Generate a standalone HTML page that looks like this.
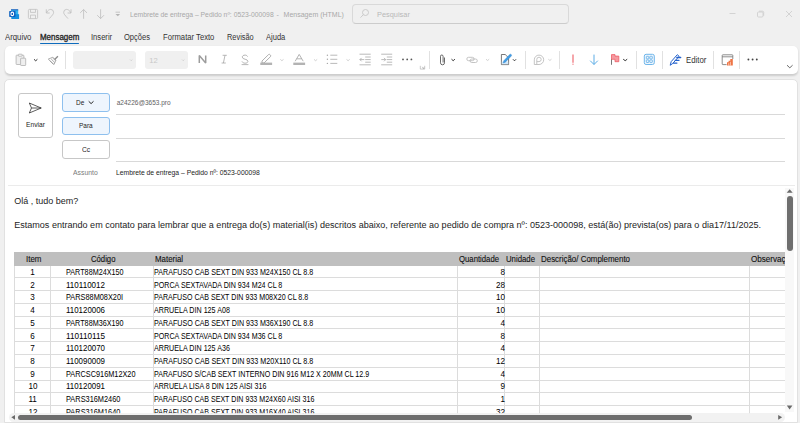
<!DOCTYPE html>
<html><head><meta charset="utf-8"><style>
*{box-sizing:border-box;margin:0;padding:0}
html,body{width:800px;height:423px;overflow:hidden;background:#f0f0f0;font-family:"Liberation Sans",sans-serif;color:#242424}
.a{position:absolute}
svg{position:absolute;overflow:visible}
.title{position:absolute;left:130px;top:10.3px;font-size:7px;line-height:10px;color:#a8a8a8;white-space:nowrap}
.search{position:absolute;left:352.3px;top:4px;width:217px;height:19.5px;border:1px solid #d9d9d9;border-bottom-color:#cccccc;border-radius:4px;background:#f0f0f0}
.search span{position:absolute;left:23.7px;top:4.9px;font-size:7.4px;line-height:10px;color:#b8b8b8}
.tab{position:absolute;top:32.1px;font-size:8.3px;line-height:10px;color:#3a3a3a;white-space:nowrap;transform:scaleX(.93);transform-origin:0 50%}
.uline{position:absolute;left:39.7px;top:42.5px;width:39.5px;height:1.6px;background:#0f6cbd;border-radius:1px}
.ribbon{position:absolute;left:5px;top:46px;width:793px;height:28.3px;background:#fff;border-radius:5px;box-shadow:0 1.2px 2px rgba(0,0,0,.15)}
.sep{position:absolute;top:50.5px;width:1px;height:18px;background:#e1e1e1}
.combo{position:absolute;top:51px;height:18px;background:#f0f0f0;border-radius:3px}
.chev{position:absolute}
.card{position:absolute;left:4px;top:78.5px;width:794px;height:344px;background:#fff;border:1px solid #e1e1e1;border-radius:5px 5px 0 0}
.btn{position:absolute;border:1px solid #c7c7c7;border-radius:3px;background:#fff;font-size:6.6px;line-height:9px;color:#242424;text-align:center}
.btn.sel{background:#eef5fd;border-color:#8ec0ee}
.fline{position:absolute;left:116.4px;width:669px;height:1px;background:#d9d9d9}
.body{position:absolute;left:14.2px;font-size:9px;line-height:12px;color:#242424;white-space:nowrap}
.tbl{position:absolute;left:14px;top:252px;width:771px;height:162px;overflow:hidden;background:#fff}
.thead{position:absolute;left:0;width:900px;background:#bfbfbf}
.ht{position:absolute;font-size:9px;line-height:12px;color:#111;white-space:nowrap;-webkit-text-stroke:.12px #111}
.ht span{display:inline-block;transform-origin:0 50%}
.hl{position:absolute;left:0;width:900px;height:1px;background:#dcdcdc}
.vl{position:absolute;width:1px;background:#dcdcdc}
.ct{position:absolute;font-size:9px;line-height:12px;color:#000;white-space:nowrap}
.ct span{display:inline-block}
.ct.l span{transform-origin:0 50%}
.ct.c{text-align:center}
.ct.r{text-align:right}
.ct.r span{transform-origin:100% 50%}
.sx{display:inline-block;transform-origin:0 50%}

</style></head><body>
<!-- title bar -->
<svg width="800" height="30" style="left:0;top:0">
  <!-- outlook icon -->
  <rect x="11" y="10" width="7.2" height="5" fill="#30b4ef"/>
  <rect x="11" y="9.2" width="7.2" height="1.2" fill="#1c68c0"/>
  <path d="M11.3 14.2h7.8v4.8h-7.8z" fill="#1490df"/>
  <rect x="9.2" y="10.9" width="6.3" height="6" rx=".7" fill="#0a5fbf"/>
  <ellipse cx="12.3" cy="13.9" rx="1.35" ry="1.75" fill="none" stroke="#fff" stroke-width="1.1"/>
  <!-- save -->
  <g fill="none" stroke="#c0c0c0" stroke-width=".8">
    <rect x="28.4" y="9.4" width="9.2" height="9.2" rx="1"/>
    <path d="M30.5 9.4v3h5v-3M30.5 18.6v-3.5h5v3.5"/>
  </g>
  <!-- undo / redo -->
  <g fill="none" stroke="#bcbcbc" stroke-width=".8">
    <path d="M46.3 9.3V13H49.7M46.6 12.8C47.5 10.2 49.5 9.4 50.8 9.4A3 3 0 0 1 53.6 12.3C53.6 14 52.5 15 49.3 18.6"/>
    <path d="M71 9.3V13H67.6M70.7 12.8C69.8 10.2 67.8 9.4 66.5 9.4A3 3 0 0 0 63.7 12.3C63.7 14 64.8 15 68 18.6"/>
    <path d="M83.6 9.5V18.8M80.2 12.9l3.4-3.4 3.4 3.4"/>
    <path d="M100.6 9.3V18.6M97.2 15.2l3.4 3.4 3.4-3.4"/>
    <path d="M115.5 12.2h4.5"/>
  </g>
  <path d="M115.5 14h4.6l-2.3 2.3z" fill="#b4b4b4"/>
  <!-- window controls -->
  <g fill="none" stroke="#cbcbcb" stroke-width=".8">
    <path d="M729.5 13.5h6"/>
    <rect x="757.5" y="12" width="5.5" height="5" rx="1"/>
    <path d="M759 11.2h3.5a1.2 1.2 0 0 1 1.2 1.2v3.3"/>
    <path d="M786 11l6 6M792 11l-6 6"/>
  </g>
</svg>
<div class="title" style="transform:scaleX(.97);transform-origin:0 50%">Lembrete de entrega – Pedido nº: 0523-000098</div>
<div class="title" style="left:276.6px">-</div>
<div class="title" style="left:283.6px">Mensagem (HTML)</div>
<div class="search"><span>Pesquisar</span></div>
<svg width="20" height="20" style="left:359px;top:7.2px">
  <g fill="none" stroke="#c2c2c2" stroke-width=".8"><circle cx="6.5" cy="5.5" r="3"/><path d="M4.3 7.7L1.5 10.6"/></g>
</svg>

<!-- tabs -->
<div class="uline"></div>

<!-- ribbon -->
<div class="ribbon"></div>
<div class="sep" style="left:65px"></div>
<div class="sep" style="left:429px"></div>
<div class="sep" style="left:525px"></div>
<div class="sep" style="left:559px"></div>
<div class="sep" style="left:636px"></div>
<div class="sep" style="left:662px"></div>
<div class="sep" style="left:713px"></div>
<div class="sep" style="left:739px"></div>
<div class="combo" style="left:73px;width:63px"></div>
<div class="combo" style="left:145.3px;width:42.5px"></div>
<div class="a" style="left:149.3px;top:55.7px;font-size:7.6px;line-height:10px;color:#c8c8c8">12</div>
<svg width="800" height="80" style="left:0;top:0">
  <g fill="none" stroke="#b0b0b0" stroke-width=".8">
    <!-- paste -->
    <path d="M20.3 64.5h-3.6a.6.6 0 0 1-.6-.6v-8.1a.6.6 0 0 1 .6-.6h6.6a.6.6 0 0 1 .6.6v2.3" fill="#efefef"/>
    <rect x="18.4" y="54.2" width="3.6" height="2" rx=".5" fill="#fff"/>
    <rect x="20.6" y="58.2" width="5.1" height="7.3" rx=".6" fill="#efefef"/>
  </g>
  <g fill="none" stroke="#8a8a8a" stroke-width=".7">
    <!-- format painter -->
    <path d="M48.3 59.1l4.6-1.9 3 3-1.9 4.4z"/>
    <path d="M49.8 60.6l3.4 3.4M51.2 59l3.6 3.6M53 58.2l2.6 2.6"/>
    <path d="M54.7 59.5l3.2-3.3" stroke-width="1.3"/>
  </g>
  <g fill="none" stroke="#333" stroke-width="1">
    <path d="M34 59.3l1.7 1.5 1.7-1.5"/>
  </g>
  <g fill="none" stroke="#c8c8c8" stroke-width=".7">
    <path d="M130 59.5l1.2 1.2 1.2-1.2M182 59.5l1.2 1.2 1.2-1.2"/>
  </g>
  <!-- N I S -->
  <path d="M199.3 63.1V55.6L205.7 62.9V55.4" fill="none" stroke="#9c9c9c" stroke-width="1.5" stroke-linejoin="bevel"/>
  <path d="M222.6 55.3h4.2M221.6 63h4.2M225 55.3l-1.6 7.7" fill="none" stroke="#a6a6a6" stroke-width=".8"/>
  <path d="M247.6 56.6C247 55.4 245.9 55.1 245 55.1C243.3 55.1 242.3 56 242.3 57.1C242.3 59.8 247.9 58.7 247.9 61.3C247.9 62.5 246.8 63.2 245.1 63.2C243.8 63.2 242.6 62.6 242 61.5" fill="none" stroke="#a6a6a6" stroke-width=".85"/>
  <path d="M241.6 64.6h6.8" stroke="#a6a6a6" stroke-width=".8"/>
  <!-- highlighter -->
  <g fill="none" stroke="#9c9c9c" stroke-width=".8">
    <path d="M262 61l6.5-6.4a1 1 0 0 1 1.4 0l.6.6a1 1 0 0 1 0 1.4L264 63h-2z"/>
  </g>
  <rect x="260.3" y="62.6" width="11.8" height="2.4" fill="#b3b3b3"/>
  <path d="M280.3 59.4l1.6 1.3 1.6-1.3" fill="none" stroke="#bdbdbd" stroke-width=".7"/>
  <!-- font color A -->
  <path d="M295.2 61.2L299.2 54.4L303.2 61.2M296.6 58.8h5.2" fill="none" stroke="#a6a6a6" stroke-width=".85"/>
  <rect x="293.3" y="62.6" width="11.8" height="2.4" fill="#b3b3b3"/>
  <path d="M314.0 59.4l1.6 1.3 1.6-1.3" fill="none" stroke="#bdbdbd" stroke-width=".7"/>
  <!-- bullets -->
  <g fill="#a8a8a8">
    <circle cx="327.4" cy="55.2" r=".7"/><circle cx="327.4" cy="59.3" r=".7"/><circle cx="327.4" cy="63.4" r=".7"/>
  </g>
  <g fill="none" stroke="#a8a8a8" stroke-width=".8">
    <path d="M330.3 55.2h7M330.3 59.3h7M330.3 63.4h7"/>
  </g>
  <path d="M346.5 59.4l1.6 1.3 1.6-1.3" fill="none" stroke="#bdbdbd" stroke-width=".7"/>
  <!-- outdent / indent -->
  <g fill="none" stroke="#a8a8a8" stroke-width=".8">
    <path d="M359.5 54.2h11.2M365.2 57h5.5M365.2 59.6h5.5M365.2 62.2h5.5M359.5 64.8h11.2"/>
    <path d="M359.9 59.6h4.4M361.6 57.9l-1.7 1.7 1.7 1.7"/>
    <path d="M381.2 54.2h11M386.8 57h5.4M386.8 59.6h5.4M386.8 62.2h5.4M381.2 64.8h11"/>
    <path d="M381.3 59.6h4.4M384 57.9l1.7 1.7-1.7 1.7"/>
    <path d="M420.3 65.8v3.3h4.4v-3.3M421.9 66.9l2 1.6M423.9 67.3v1.2h-1.2" stroke-width=".6"/>
  </g>
  <g fill="#555">
    <circle cx="403" cy="59.4" r=".9"/><circle cx="407.2" cy="59.4" r=".9"/><circle cx="411.4" cy="59.4" r=".9"/>
  </g>
  <!-- paperclip -->
  <path d="M444.5 57.5v5.3a2 2 0 0 1-4 0v-6.5a1.3 1.3 0 0 1 2.6 0v6.2" fill="none" stroke="#444" stroke-width=".8"/>
  <path d="M451.5 59.2l1.7 1.5 1.7-1.5" fill="none" stroke="#333" stroke-width="1"/>
  <!-- link -->
  <g fill="none" stroke="#bdbdbd" stroke-width=".9">
    <rect x="466.8" y="57.3" width="7.3" height="3.4" rx="1.7"/>
    <rect x="470" y="59" width="7.3" height="3.5" rx="1.75"/>
  </g>
  <path d="M486 59.2l1.6 1.3 1.6-1.3" fill="none" stroke="#c0c0c0" stroke-width=".7"/>
  <!-- signature -->
  <path d="M501.4 54.5h3.8l3.4 3.4v6.7h-7.2z" fill="#fff" stroke="#555" stroke-width=".8" stroke-linejoin="round"/>
  <rect x="501.8" y="61.6" width="6.4" height="2.6" fill="#d3e8f8"/>
  <path d="M503.2 62.9l.6-2.2 5.9-6.2a1.1 1.1 0 0 1 1.6 1.5l-5.9 6.2z" fill="#3f9de6" stroke="#2f7fc4" stroke-width=".4"/>
  <path d="M513 59.3l1.5 1.5 1.5-1.5" fill="none" stroke="#333" stroke-width="1"/>
  <!-- loop -->
  <g fill="none" stroke="#bdbdbd" stroke-width=".9">
    <path d="M534.3 64.5v-4.7a4.7 4.7 0 1 1 4.7 4.7z"/>
    <path d="M536.8 64.3v-4.9a2.2 2.2 0 1 1 2.2 2.2h-2.2"/>
  </g>
  <path d="M548.3 59.2l1.6 1.3 1.6-1.3" fill="none" stroke="#c0c0c0" stroke-width=".7"/>
  <!-- importance high -->
  <path d="M573 54.5v8.2" stroke="#ee6b72" stroke-width="1.2"/>
  <circle cx="573" cy="64.2" r=".65" fill="#ee6b72"/>
  <!-- low -->
  <path d="M594 54.6v9.8M590.2 60.7l3.8 3.8 3.8-3.8" fill="none" stroke="#4aa3e2" stroke-width=".9"/>
  <!-- flag -->
  <path d="M611.5 59v5.8" stroke="#555" stroke-width=".8"/>
  <path d="M611.5 54.6h3.5v1.5h3.8v5.6h-3.8v-2.4h-3.5z" fill="#f59aa0" stroke="#ee5e67" stroke-width=".8" stroke-linejoin="round"/>
  <path d="M623.2 59.2l2 1.5 2-1.5" fill="none" stroke="#333" stroke-width="1"/>
  <!-- apps -->
  <rect x="644.3" y="54.3" width="10" height="10.2" rx="1.8" fill="#eef6fd" stroke="#6fb6ea" stroke-width="1"/>
  <g fill="none" stroke="#5aa9e6" stroke-width=".75">
    <rect x="646.3" y="56.3" width="2.5" height="2.6" rx=".5"/><rect x="649.8" y="56.3" width="2.5" height="2.6" rx=".5"/>
    <rect x="646.3" y="59.9" width="2.5" height="2.6" rx=".5"/><rect x="649.8" y="59.9" width="2.5" height="2.6" rx=".5"/>
  </g>
  <!-- editor -->
  <g fill="none" stroke="#2462cc" stroke-linecap="round" stroke-linejoin="round">
    <path d="M670.3 64.9l.9-3.3 6.1-6.9 1.8 1.6-6.1 6.9z" stroke-width="1"/>
    <path d="M676.8 57.5h3.9M675.2 60.3h3.8M673.4 63.1h3.5" stroke-width="1.3"/>
  </g>
  <!-- calendar -->
  <g fill="none" stroke="#6a6a6a" stroke-width=".75">
    <path d="M726.6 64.6h-3.8a.6.6 0 0 1-.6-.6v-8.6a.6.6 0 0 1 .6-.6h9.4a.6.6 0 0 1 .6.6v3.6M722.2 56.8h10.6"/>
  </g>
  <path d="M727 65.6v-3.4h1.6v-1.4h1.7v-1.9h2.5v6.7z" fill="#ee7444"/>
  <path d="M728.7 63.2v2.4M730.4 61.8v3.8" stroke="#fde3d6" stroke-width=".7"/>
  <g fill="#444">
    <circle cx="748.4" cy="59.5" r=".95"/><circle cx="752.6" cy="59.5" r=".95"/><circle cx="756.8" cy="59.5" r=".95"/>
  </g>
  <path d="M787 65.2l2.8 2.6 2.8-2.6" fill="none" stroke="#444" stroke-width=".8"/>
</svg>

<!-- compose card -->
<div class="card"></div>
<div class="btn" style="left:17.5px;top:93.2px;width:35.2px;height:44.8px"></div>
<svg width="20" height="20" style="left:0;top:0">
  <path d="M29.3 103l11.9 5-11.9 5 2.2-5z M31.5 108h9.7" fill="none" stroke="#333" stroke-width=".8" stroke-linejoin="round"/>
</svg>
<div class="btn sel" style="left:62px;top:93.2px;width:47.5px;height:18.5px"></div>
<svg width="10" height="10" style="left:0;top:0"><path d="M88.7 101.3l2.4 2.3 2.4-2.3" fill="none" stroke="#222" stroke-width="1"/></svg>
<div class="btn sel" style="left:62px;top:116.6px;width:47.5px;height:18.7px"></div>
<div class="btn" style="left:62px;top:140.4px;width:47.5px;height:18.5px"></div>
<div class="a" style="left:116.7px;top:98.2px;font-size:6.5px;line-height:9px;color:#616161">a24226@3653.pro</div>
<div class="fline" style="top:113.7px"></div>
<div class="fline" style="top:137.5px"></div>
<div class="fline" style="top:161px"></div>
<div class="a" style="left:8px;top:185px;width:787px;height:1px;background:#ebebeb"></div>

<!-- message body -->
<div class="body" style="top:195px">Olá , tudo bem?</div>
<div class="body" style="top:219px;font-size:9.065px">Estamos entrando em contato para lembrar que a entrega do(s) material(is) descritos abaixo, referente ao pedido de compra nº: 0523-000098, está(ão) prevista(os) para o dia17/11/2025.</div>

<div class="tbl">
<div class="thead" style="top:0px;height:13.5px"></div>
<div class="ht" style="left:11.60px;top:1.48px"><span style="transform:scaleX(0.880)">Item</span></div>
<div class="ht" style="left:76.60px;top:1.48px"><span style="transform:scaleX(0.856)">Código</span></div>
<div class="ht" style="left:140.50px;top:1.48px"><span style="transform:scaleX(0.875)">Material</span></div>
<div class="ht" style="left:445.20px;top:1.48px"><span style="transform:scaleX(0.860)">Quantidade</span></div>
<div class="ht" style="left:492.00px;top:1.48px"><span style="transform:scaleX(0.865)">Unidade</span></div>
<div class="ht" style="left:526.50px;top:1.48px"><span style="transform:scaleX(0.881)">Descrição/ Complemento</span></div>
<div class="ht" style="left:737.00px;top:1.48px"><span style="transform:scaleX(0.896)">Observação</span></div>
<div class="hl" style="top:25px"></div>
<div class="hl" style="top:38px"></div>
<div class="hl" style="top:51px"></div>
<div class="hl" style="top:64px"></div>
<div class="hl" style="top:76px"></div>
<div class="hl" style="top:89px"></div>
<div class="hl" style="top:102px"></div>
<div class="hl" style="top:115px"></div>
<div class="hl" style="top:128px"></div>
<div class="hl" style="top:140px"></div>
<div class="hl" style="top:153px"></div>
<div class="hl" style="top:166px"></div>
<div class="vl" style="left:0px;top:13.5px;height:200px"></div>
<div class="vl" style="left:36px;top:13.5px;height:200px"></div>
<div class="vl" style="left:139px;top:13.5px;height:200px"></div>
<div class="vl" style="left:443px;top:13.5px;height:200px"></div>
<div class="vl" style="left:490px;top:13.5px;height:200px"></div>
<div class="vl" style="left:525px;top:13.5px;height:200px"></div>
<div class="vl" style="left:735px;top:13.5px;height:200px"></div>
<div class="ct c" style="left:0.8px;width:36px;top:13.98px"><span style="transform:scaleX(.9)">1</span></div>
<div class="ct l" style="left:51.8px;top:13.98px"><span style="transform:scaleX(0.803)">PART88M24X150</span></div>
<div class="ct l" style="left:140.4px;top:13.98px"><span style="transform:scaleX(0.792)">PARAFUSO CAB SEXT DIN 933 M24X150 CL 8.8</span></div>
<div class="ct r" style="left:443px;width:48.19999999999999px;top:13.98px"><span style="transform:scaleX(.9)">8</span></div>
<div class="ct c" style="left:0.8px;width:36px;top:26.70px"><span style="transform:scaleX(.9)">2</span></div>
<div class="ct l" style="left:51.8px;top:26.70px"><span style="transform:scaleX(0.892)">110110012</span></div>
<div class="ct l" style="left:140.4px;top:26.70px"><span style="transform:scaleX(0.791)">PORCA SEXTAVADA DIN 934 M24 CL 8</span></div>
<div class="ct r" style="left:443px;width:48.19999999999999px;top:26.70px"><span style="transform:scaleX(.9)">28</span></div>
<div class="ct c" style="left:0.8px;width:36px;top:39.42px"><span style="transform:scaleX(.9)">3</span></div>
<div class="ct l" style="left:51.8px;top:39.42px"><span style="transform:scaleX(0.817)">PARS88M08X20I</span></div>
<div class="ct l" style="left:140.4px;top:39.42px"><span style="transform:scaleX(0.787)">PARAFUSO CAB SEXT DIN 933 M08X20 CL 8.8</span></div>
<div class="ct r" style="left:443px;width:48.19999999999999px;top:39.42px"><span style="transform:scaleX(.9)">10</span></div>
<div class="ct c" style="left:0.8px;width:36px;top:52.14px"><span style="transform:scaleX(.9)">4</span></div>
<div class="ct l" style="left:51.8px;top:52.14px"><span style="transform:scaleX(0.879)">110120006</span></div>
<div class="ct l" style="left:140.4px;top:52.14px"><span style="transform:scaleX(0.794)">ARRUELA DIN 125 A08</span></div>
<div class="ct r" style="left:443px;width:48.19999999999999px;top:52.14px"><span style="transform:scaleX(.9)">10</span></div>
<div class="ct c" style="left:0.8px;width:36px;top:64.86px"><span style="transform:scaleX(.9)">5</span></div>
<div class="ct l" style="left:51.8px;top:64.86px"><span style="transform:scaleX(0.803)">PART88M36X190</span></div>
<div class="ct l" style="left:140.4px;top:64.86px"><span style="transform:scaleX(0.792)">PARAFUSO CAB SEXT DIN 933 M36X190 CL 8.8</span></div>
<div class="ct r" style="left:443px;width:48.19999999999999px;top:64.86px"><span style="transform:scaleX(.9)">4</span></div>
<div class="ct c" style="left:0.8px;width:36px;top:77.58px"><span style="transform:scaleX(.9)">6</span></div>
<div class="ct l" style="left:51.8px;top:77.58px"><span style="transform:scaleX(0.906)">110110115</span></div>
<div class="ct l" style="left:140.4px;top:77.58px"><span style="transform:scaleX(0.791)">PORCA SEXTAVADA DIN 934 M36 CL 8</span></div>
<div class="ct r" style="left:443px;width:48.19999999999999px;top:77.58px"><span style="transform:scaleX(.9)">8</span></div>
<div class="ct c" style="left:0.8px;width:36px;top:90.30px"><span style="transform:scaleX(.9)">7</span></div>
<div class="ct l" style="left:51.8px;top:90.30px"><span style="transform:scaleX(0.879)">110120070</span></div>
<div class="ct l" style="left:140.4px;top:90.30px"><span style="transform:scaleX(0.794)">ARRUELA DIN 125 A36</span></div>
<div class="ct r" style="left:443px;width:48.19999999999999px;top:90.30px"><span style="transform:scaleX(.9)">4</span></div>
<div class="ct c" style="left:0.8px;width:36px;top:103.02px"><span style="transform:scaleX(.9)">8</span></div>
<div class="ct l" style="left:51.8px;top:103.02px"><span style="transform:scaleX(0.879)">110090009</span></div>
<div class="ct l" style="left:140.4px;top:103.02px"><span style="transform:scaleX(0.795)">PARAFUSO CAB SEXT DIN 933 M20X110 CL 8.8</span></div>
<div class="ct r" style="left:443px;width:48.19999999999999px;top:103.02px"><span style="transform:scaleX(.9)">12</span></div>
<div class="ct c" style="left:0.8px;width:36px;top:115.74px"><span style="transform:scaleX(.9)">9</span></div>
<div class="ct l" style="left:51.8px;top:115.74px"><span style="transform:scaleX(0.814)">PARCSC916M12X20</span></div>
<div class="ct l" style="left:140.4px;top:115.74px"><span style="transform:scaleX(0.790)">PARAFUSO S/CAB SEXT INTERNO DIN 916 M12 X 20MM CL 12.9</span></div>
<div class="ct r" style="left:443px;width:48.19999999999999px;top:115.74px"><span style="transform:scaleX(.9)">4</span></div>
<div class="ct c" style="left:0.8px;width:36px;top:128.46px"><span style="transform:scaleX(.9)">10</span></div>
<div class="ct l" style="left:51.8px;top:128.46px"><span style="transform:scaleX(0.879)">110120091</span></div>
<div class="ct l" style="left:140.4px;top:128.46px"><span style="transform:scaleX(0.785)">ARRUELA LISA 8 DIN 125 AISI 316</span></div>
<div class="ct r" style="left:443px;width:48.19999999999999px;top:128.46px"><span style="transform:scaleX(.9)">9</span></div>
<div class="ct c" style="left:0.8px;width:36px;top:141.18px"><span style="transform:scaleX(.9)">11</span></div>
<div class="ct l" style="left:51.8px;top:141.18px"><span style="transform:scaleX(0.820)">PARS316M2460</span></div>
<div class="ct l" style="left:140.4px;top:141.18px"><span style="transform:scaleX(0.787)">PARAFUSO CAB SEXT DIN 933 M24X60 AISI 316</span></div>
<div class="ct r" style="left:443px;width:48.19999999999999px;top:141.18px"><span style="transform:scaleX(.9)">1</span></div>
<div class="ct c" style="left:0.8px;width:36px;top:153.90px"><span style="transform:scaleX(.9)">12</span></div>
<div class="ct l" style="left:51.8px;top:153.90px"><span style="transform:scaleX(0.820)">PARS316M1640</span></div>
<div class="ct l" style="left:140.4px;top:153.90px"><span style="transform:scaleX(0.787)">PARAFUSO CAB SEXT DIN 933 M16X40 AISI 316</span></div>
<div class="ct r" style="left:443px;width:48.19999999999999px;top:153.90px"><span style="transform:scaleX(.9)">32</span></div>
</div>

<!-- scrollbars -->
<div class="a" style="left:785px;top:187.5px;width:9px;height:224px;background:#f8f8f8"></div>
<svg width="10" height="10" style="left:0;top:0"><path d="M786.7 192.8l3-3.6 3 3.6z" fill="#6a6a6a"/></svg>
<div class="a" style="left:787px;top:196px;width:5.5px;height:55px;background:#6e6e6e;border-radius:3px"></div>
<svg width="10" height="10" style="left:0;top:0"><path d="M786.8 405.5h5.6l-2.8 3.9z" fill="#6a6a6a"/></svg>
<div class="a" style="left:9px;top:412.5px;width:776px;height:9px;background:rgba(240,240,240,.85);border-radius:5px"></div>
<svg width="10" height="10" style="left:0;top:0"><path d="M15 415v4.7l-3.7-2.35z" fill="#6a6a6a"/></svg>
<div class="a" style="left:18.3px;top:415px;width:673.7px;height:4.6px;background:#6e6e6e;border-radius:2.5px"></div>
<svg width="10" height="10" style="left:0;top:0"><path d="M778.2 415v4.7l3.9-2.35z" fill="#6a6a6a"/></svg>
<div class="a" style="left:4.5px;top:31.12px;font-size:8.3px;line-height:12px;color:#333;white-space:nowrap;transform:scaleX(0.938);transform-origin:0 50%">Arquivo</div>
<div class="a" style="left:39.7px;top:31.12px;font-size:8.3px;line-height:12px;color:#222;-webkit-text-stroke:.3px #222;white-space:nowrap;transform:scaleX(0.958);transform-origin:0 50%">Mensagem</div>
<div class="a" style="left:90.5px;top:31.12px;font-size:8.3px;line-height:12px;color:#333;white-space:nowrap;transform:scaleX(0.915);transform-origin:0 50%">Inserir</div>
<div class="a" style="left:124.0px;top:31.12px;font-size:8.3px;line-height:12px;color:#333;white-space:nowrap;transform:scaleX(0.909);transform-origin:0 50%">Opções</div>
<div class="a" style="left:162.5px;top:31.12px;font-size:8.3px;line-height:12px;color:#333;white-space:nowrap;transform:scaleX(0.923);transform-origin:0 50%">Formatar Texto</div>
<div class="a" style="left:226.6px;top:31.12px;font-size:8.3px;line-height:12px;color:#333;white-space:nowrap;transform:scaleX(0.891);transform-origin:0 50%">Revisão</div>
<div class="a" style="left:265.6px;top:31.12px;font-size:8.3px;line-height:12px;color:#333;white-space:nowrap;transform:scaleX(0.910);transform-origin:0 50%">Ajuda</div>
<div class="a" style="left:686.0px;top:54.09px;font-size:8.4px;line-height:12px;color:#333;white-space:nowrap;transform:scaleX(0.932);transform-origin:0 50%">Editor</div>
<div class="a" style="left:25.8px;top:118.74px;font-size:7.4px;line-height:12px;color:#242424;white-space:nowrap;transform:scaleX(0.902);transform-origin:0 50%">Enviar</div>
<div class="a" style="left:75.7px;top:96.67px;font-size:7.6px;line-height:12px;color:#242424;white-space:nowrap;transform:scaleX(0.855);transform-origin:0 50%">De</div>
<div class="a" style="left:78.6px;top:120.17px;font-size:7.6px;line-height:12px;color:#242424;white-space:nowrap;transform:scaleX(0.854);transform-origin:0 50%">Para</div>
<div class="a" style="left:81.9px;top:143.77px;font-size:7.6px;line-height:12px;color:#242424;white-space:nowrap;transform:scaleX(0.884);transform-origin:0 50%">Cc</div>
<div class="a" style="left:73.1px;top:166.87px;font-size:7.3px;line-height:12px;color:#7a7a7a;white-space:nowrap;transform:scaleX(0.937);transform-origin:0 50%">Assunto</div>
<div class="a" style="left:116.4px;top:167.20px;font-size:7.5px;line-height:12px;color:#242424;white-space:nowrap;transform:scaleX(0.906);transform-origin:0 50%">Lembrete de entrega – Pedido nº: 0523-000098</div>

</body></html>
